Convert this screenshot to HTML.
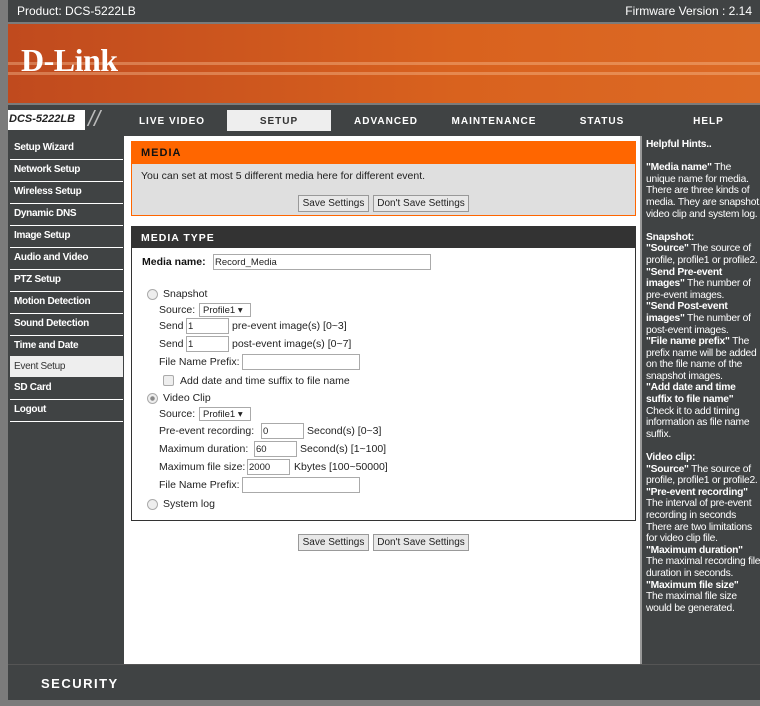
<!DOCTYPE html>
<html><head><meta charset="utf-8"><style>
*{margin:0;padding:0;box-sizing:border-box}
body{width:760px;height:706px;background:#7b7b7b;position:relative;overflow:hidden;font-family:"Liberation Sans",sans-serif;font-size:10.5px;color:#222}
.a{position:absolute;white-space:nowrap}
.top{left:8px;top:0;width:752px;height:22px;background:#404344;color:#fff;font-size:12px}
.ban{left:8px;top:24px;width:752px;height:79px;background:linear-gradient(90deg,#c04a1e,#d9621e 60%,#dc6a25)}
.nav{left:8px;top:105px;width:752px;height:31px;background:#404344}
.tab{top:116px;color:#fff;font-weight:bold;font-size:10px;letter-spacing:1px;text-align:center}
.side{left:8px;top:136px;width:116px;height:528px;background:#404344}
.si{left:10px;width:113px;height:22px;color:#fff;font-size:10px;font-weight:bold;padding:4px 0 0 4px;border-bottom:1px solid #fff;letter-spacing:-.3px}
.help{left:640px;top:136px;width:120px;height:528px;background:#404344;border-left:2px solid #999;color:#fff;font-size:10.3px;padding:3px 0 0 4px;white-space:nowrap;letter-spacing:-.25px;overflow:hidden}
.help div{height:11.6px;line-height:11.6px}
.help b{font-weight:bold}
.main{left:124px;top:136px;width:516px;height:528px;background:#fff}
.btn{height:17px;border:1px solid #999;background:#e8e8e8;font-size:10px;padding:2px 0 0;color:#222;text-align:center}
.inp{height:16px;border:1px solid #aaa;background:#fff;font-size:9.5px;padding:2px 1px 0}
.sel{height:14px;border:1px solid #aaa;background:#fff;font-size:9.5px;padding:1px 3px 0}
.rad{width:11px;height:11px;border-radius:50%;border:1px solid #aaa;background:#eee}
.chk{width:11px;height:11px;border:1px solid #aaa;background:#eee;border-radius:2px}
</style></head><body>
<div class="a top"><span class="a" style="left:9px;top:4px">Product: DCS-5222LB</span><span class="a" style="right:8px;top:4px">Firmware Version : 2.14</span></div>
<div class="a ban">
<div class="a" style="left:0;top:38px;width:752px;height:3px;background:rgba(255,210,170,.35)"></div>
<div class="a" style="left:0;top:48px;width:752px;height:3px;background:rgba(255,210,170,.35)"></div>
<span class="a" style="left:13px;top:18px;font-family:'Liberation Serif',serif;font-weight:bold;font-size:32px;color:#fff;letter-spacing:-0.5px">D-Link</span></div>
<div class="a nav"></div>
<div class="a" style="left:8px;top:110px;width:77px;height:20px;background:#fff;font-style:italic;font-weight:bold;font-size:11px;padding:3px 0 0 1px;color:#222">DCS-5222LB</div>
<span class="a" style="left:88px;top:106px;color:#bbb;font-size:22px;font-style:italic">//</span>
<div class="a" style="left:227px;top:110px;width:104px;height:21px;background:#eee"></div>
<span class="a tab" style="left:120px;width:104px">LIVE VIDEO</span>
<span class="a tab" style="left:227px;width:104px;color:#333">SETUP</span>
<span class="a tab" style="left:334px;width:104px">ADVANCED</span>
<span class="a tab" style="left:441px;width:106px">MAINTENANCE</span>
<span class="a tab" style="left:550px;width:104px">STATUS</span>
<span class="a tab" style="left:657px;width:103px">HELP</span>
<div class="a side"></div>
<div class="a si" style="top:138px">Setup Wizard</div>
<div class="a si" style="top:160px">Network Setup</div>
<div class="a si" style="top:182px">Wireless Setup</div>
<div class="a si" style="top:204px">Dynamic DNS</div>
<div class="a si" style="top:226px">Image Setup</div>
<div class="a si" style="top:248px">Audio and Video</div>
<div class="a si" style="top:270px">PTZ Setup</div>
<div class="a si" style="top:292px">Motion Detection</div>
<div class="a si" style="top:314px">Sound Detection</div>
<div class="a si" style="top:336px">Time and Date</div>
<div class="a si" style="top:356px;height:21px;background:#eee;color:#333;font-weight:normal;padding-top:5px;border:0">Event Setup</div>
<div class="a si" style="top:378px;height:22px">SD Card</div>
<div class="a si" style="top:400px">Logout</div>
<div class="a main"></div>
<div class="a" style="left:131px;top:141px;width:505px;height:75px;border:1px solid #f60;background:#dfdfdf"></div>
<div class="a" style="left:131px;top:141px;width:505px;height:23px;background:#f60;color:#111;font-weight:bold;font-size:11px;letter-spacing:1px;padding:6px 0 0 10px">MEDIA</div>
<span class="a" style="left:141px;top:170px">You can set at most 5 different media here for different event.</span>
<div class="a btn" style="left:298px;top:195px;width:71px">Save Settings</div>
<div class="a btn" style="left:373px;top:195px;width:96px">Don't Save Settings</div>
<div class="a" style="left:131px;top:226px;width:505px;height:295px;border:1px solid #333"></div>
<div class="a" style="left:131px;top:226px;width:505px;height:22px;background:#333;color:#fff;font-weight:bold;letter-spacing:1px;padding:6px 0 0 10px">MEDIA TYPE</div>
<span class="a" style="left:142px;top:256px;font-weight:bold;color:#111">Media name:</span>
<div class="a inp" style="left:213px;top:254px;width:218px">Record_Media</div>
<div class="a rad" style="left:147px;top:289px"></div><span class="a" style="left:163px;top:288px">Snapshot</span>
<span class="a" style="left:159px;top:304px">Source:</span><div class="a sel" style="left:199px;top:303px;width:52px">Profile1 ▾</div>
<span class="a" style="left:159px;top:320px">Send</span><div class="a inp" style="left:186px;top:318px;width:43px">1</div><span class="a" style="left:232px;top:320px">pre-event image(s) [0~3]</span>
<span class="a" style="left:159px;top:338px">Send</span><div class="a inp" style="left:186px;top:336px;width:43px">1</div><span class="a" style="left:232px;top:338px">post-event image(s) [0~7]</span>
<span class="a" style="left:159px;top:356px">File Name Prefix:</span><div class="a inp" style="left:242px;top:354px;width:118px"></div>
<div class="a chk" style="left:163px;top:375px"></div><span class="a" style="left:180px;top:375px">Add date and time suffix to file name</span>
<div class="a rad" style="left:147px;top:393px;background:radial-gradient(#888 30%,#eee 40%)"></div><span class="a" style="left:163px;top:392px">Video Clip</span>
<span class="a" style="left:159px;top:408px">Source:</span><div class="a sel" style="left:199px;top:407px;width:52px">Profile1 ▾</div>
<span class="a" style="left:159px;top:425px">Pre-event recording:</span><div class="a inp" style="left:261px;top:423px;width:43px">0</div><span class="a" style="left:307px;top:425px">Second(s) [0~3]</span>
<span class="a" style="left:159px;top:443px">Maximum duration:</span><div class="a inp" style="left:254px;top:441px;width:43px">60</div><span class="a" style="left:300px;top:443px">Second(s) [1~100]</span>
<span class="a" style="left:159px;top:461px">Maximum file size:</span><div class="a inp" style="left:247px;top:459px;width:43px">2000</div><span class="a" style="left:294px;top:461px">Kbytes [100~50000]</span>
<span class="a" style="left:159px;top:479px">File Name Prefix:</span><div class="a inp" style="left:242px;top:477px;width:118px"></div>
<div class="a rad" style="left:147px;top:499px"></div><span class="a" style="left:163px;top:498px">System log</span>
<div class="a btn" style="left:298px;top:534px;width:71px">Save Settings</div>
<div class="a btn" style="left:373px;top:534px;width:96px">Don't Save Settings</div>
<div class="a help">
<div><b>Helpful Hints..</b></div><div></div>
<div><b>"Media name"</b> The</div><div>unique name for media.</div><div>There are three kinds of</div><div>media. They are snapshot,</div><div>video clip and system log.</div><div></div>
<div><b>Snapshot:</b></div><div><b>"Source"</b> The source of</div><div>profile, profile1 or profile2.</div><div><b>"Send Pre-event</b></div><div><b>images"</b> The number of</div><div>pre-event images.</div><div><b>"Send Post-event</b></div><div><b>images"</b> The number of</div><div>post-event images.</div><div><b>"File name prefix"</b> The</div><div>prefix name will be added</div><div>on the file name of the</div><div>snapshot images.</div><div><b>"Add date and time</b></div><div><b>suffix to file name"</b></div><div>Check it to add timing</div><div>information as file name</div><div>suffix.</div><div></div>
<div><b>Video clip:</b></div><div><b>"Source"</b> The source of</div><div>profile, profile1 or profile2.</div><div><b>"Pre-event recording"</b></div><div>The interval of pre-event</div><div>recording in seconds</div><div>There are two limitations</div><div>for video clip file.</div><div><b>"Maximum duration"</b></div><div>The maximal recording file</div><div>duration in seconds.</div><div><b>"Maximum file size"</b></div><div>The maximal file size</div><div>would be generated.</div>
</div>
<div class="a" style="left:8px;top:664px;width:752px;height:36px;background:#404344;border-top:1px solid #555"><span class="a" style="left:33px;top:11px;color:#fff;font-weight:bold;font-size:13px;letter-spacing:1.5px">SECURITY</span></div>
</body></html>
